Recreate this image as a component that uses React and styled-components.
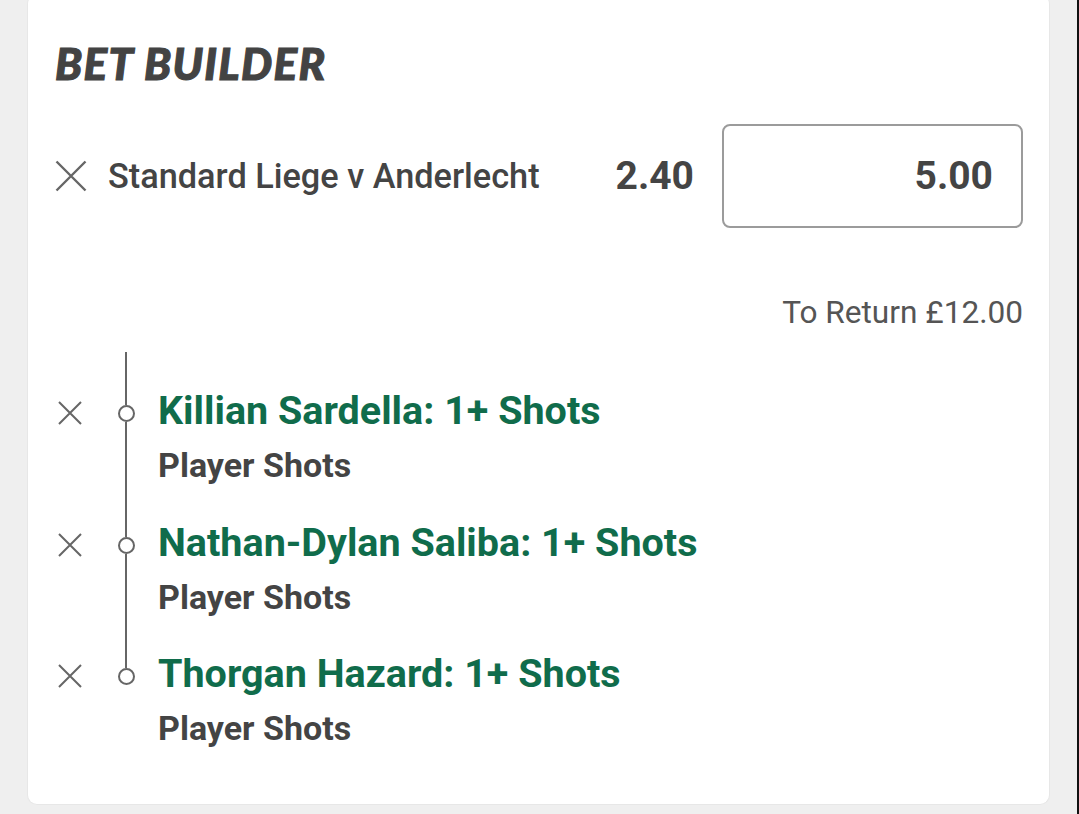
import React from "react";
import styled, { createGlobalStyle } from "styled-components";

const Global = createGlobalStyle`
  html, body { margin: 0; padding: 0; background: #efefef; }
  body { font-family: Roboto, "Liberation Sans", sans-serif; color: #434343; }
`;

const Page = styled.div`
  display: flex;
  width: 1079px;
  height: 814px;
  overflow: hidden;
  background: #efefef;
`;

const Card = styled.section`
  width: 1023px;
  box-sizing: border-box;
  margin: -6px 0 0 27px;
  height: 811px;
  padding: 43px 26px 0 27px;
  background: #fff;
  border: 1px solid #e7e7e7;
  border-top: none;
  border-radius: 10px;
  flex: none;
`;

const Spacer = styled.div`
  flex: 1;
`;

const Edge = styled.div`
  width: 2.5px;
  background: #111;
`;

const Title = styled.h1`
  margin: 0;
  font-family: Lato, Roboto, sans-serif;
  font-weight: 900;
  font-style: italic;
  font-size: 44px;
  line-height: 52px;
  letter-spacing: 1.3px;
  -webkit-text-stroke: 1.1px #434343;
  color: #434343;
`;

const MainRow = styled.div`
  display: flex;
  align-items: center;
  height: 104px;
  margin-top: 35px;
`;

const CloseButton = styled.button`
  display: flex;
  align-items: center;
  justify-content: center;
  width: ${(p) => p.$size}px;
  height: ${(p) => p.$size}px;
  padding: 0;
  border: none;
  background: none;
  color: #666;
  flex: none;
`;

const EventName = styled.div`
  flex: 1;
  margin-left: 21px;
  font-size: 34.3px;
  font-weight: 500;
  color: #444;
  white-space: nowrap;
`;

const Price = styled.div`
  font-size: 39px;
  font-weight: 700;
  color: #444;
  margin-right: 28px;
`;

const StakeBox = styled.div`
  width: 301px;
  height: 104px;
  box-sizing: border-box;
  border: 2px solid #9b9b9b;
  border-radius: 8px;
  display: flex;
  align-items: center;
  justify-content: flex-end;
  padding-right: 28px;
  font-size: 39px;
  font-weight: 700;
  color: #444;
`;

const ReturnRow = styled.div`
  margin-top: 65px;
  text-align: right;
  font-size: 31.6px;
  line-height: 40px;
  color: #555;
`;

const Legs = styled.div`
  margin-top: 19px;
  display: flex;
  flex-direction: column;
`;

const Leg = styled.div`
  display: grid;
  grid-template-columns: 39px 30px 1fr;
  column-gap: 17px;
  height: 131.5px;
`;

const LegClose = styled.div`
  display: flex;
  flex-direction: column;
  align-items: flex-start;
  padding: 49px 0 0 3px;
`;

const Rail = styled.div`
  display: flex;
  flex-direction: column;
  align-items: center;
`;

const RailLine = styled.div`
  width: 2.5px;
  background: ${(p) => (p.$hidden ? "transparent" : "#666")};
  flex: ${(p) => (p.$grow ? "1" : "0 0 53px")};
`;

const Dot = styled.div`
  width: 17px;
  height: 17px;
  box-sizing: border-box;
  border: 2.5px solid #666;
  border-radius: 50%;
  background: #fff;
  flex: none;
`;

const LegBody = styled.div`
  display: flex;
  flex-direction: column;
  padding-top: 32px;
  white-space: nowrap;
`;

const LegTitle = styled.div`
  font-size: 39.5px;
  font-weight: 700;
  color: #106c4b;
  line-height: 54px;
`;

const LegMarket = styled.div`
  font-size: 34px;
  font-weight: 700;
  color: #444;
  line-height: 54px;
`;

const Cross = ({ size, inset, stroke }) => (
  <svg width={size} height={size} viewBox={`0 0 ${size} ${size}`}>
    <path
      d={`M${inset} ${inset} L${size - inset} ${size - inset} M${size - inset} ${inset} L${inset} ${size - inset}`}
      stroke="currentColor"
      strokeWidth={stroke}
      fill="none"
    />
  </svg>
);

const legs = [
  { title: "Killian Sardella: 1+ Shots", market: "Player Shots" },
  { title: "Nathan-Dylan Saliba: 1+ Shots", market: "Player Shots" },
  { title: "Thorgan Hazard: 1+ Shots", market: "Player Shots" },
];

export default function App() {
  return (
    <>
      <Global />
      <Page>
        <Card>
          <Title>BET BUILDER</Title>
          <MainRow>
            <CloseButton $size={32} aria-label="remove">
              <Cross size={32} inset={1.5} stroke={2.4} />
            </CloseButton>
            <EventName>Standard Liege v Anderlecht</EventName>
            <Price>2.40</Price>
            <StakeBox>5.00</StakeBox>
          </MainRow>
          <ReturnRow>To Return £12.00</ReturnRow>
          <Legs>
            {legs.map((leg, i) => (
              <Leg key={i}>
                <LegClose>
                  <CloseButton $size={24} aria-label="remove leg">
                    <Cross size={24} inset={1} stroke={2} />
                  </CloseButton>
                </LegClose>
                <Rail>
                  <RailLine />
                  <Dot />
                  <RailLine $grow $hidden={i === legs.length - 1} />
                </Rail>
                <LegBody>
                  <LegTitle>{leg.title}</LegTitle>
                  <LegMarket>{leg.market}</LegMarket>
                </LegBody>
              </Leg>
            ))}
          </Legs>
        </Card>
        <Spacer />
        <Edge />
      </Page>
    </>
  );
}
